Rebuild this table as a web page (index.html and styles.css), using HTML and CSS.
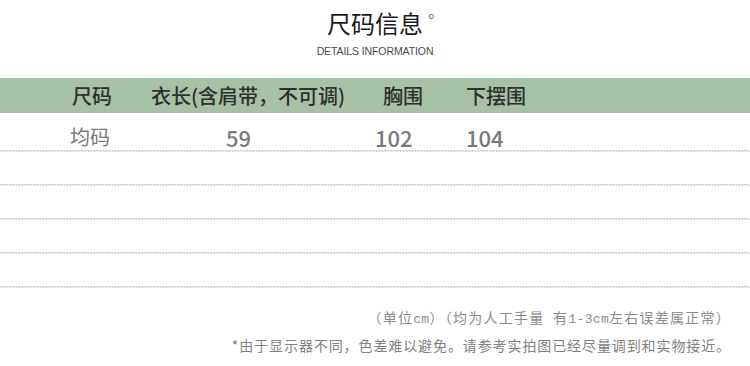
FILE: index.html
```html
<!DOCTYPE html>
<html lang="zh-CN">
<head>
<meta charset="utf-8">
<title>尺码信息</title>
<link rel="stylesheet" href="styles.css">
</head>
<body>
<div class="page">
  <header class="title">
    <h1 class="title-main">尺码信息<span class="deg">°</span></h1>
    <p class="title-sub">DETAILS INFORMATION</p>
  </header>
  <section class="table">
    <div class="row row-head">
      <span>尺码</span>
      <span>衣长(含肩带，不可调)</span>
      <span>胸围</span>
      <span>下摆围</span>
    </div>
    <div class="row row-data">
      <span>均码</span>
      <span class="num">59</span>
      <span class="num">102</span>
      <span class="num">104</span>
    </div>
    <div class="dots"></div>
    <div class="blank"></div>
    <div class="dots"></div>
    <div class="blank"></div>
    <div class="dots"></div>
    <div class="blank"></div>
    <div class="dots"></div>
    <div class="blank"></div>
    <div class="dots"></div>
  </section>
  <footer class="notes">
    <p class="note note-1">（单位<span class="mono">cm</span>）（均为人工手量&nbsp;&nbsp;有<span class="mono">1-3cm</span>左右误差属正常）</p>
    <p class="note note-2">*由于显示器不同，色差难以避免。请参考实拍图已经尽量调到和实物接近。</p>
  </footer>
</div>
</body>
</html>
```

FILE: styles.css
```css
* { box-sizing: border-box; }
html, body { margin: 0; padding: 0; background: #fff; }
.page {
  width: 750px;
  height: 366px;
  overflow: hidden;
  font-family: "Noto Sans CJK SC", "Noto Sans", sans-serif;
}
.title { text-align: center; padding-top: 9px; }
.title-main {
  margin: 0;
  font-size: 24px;
  line-height: 28px;
  font-weight: 400;
  color: #1a1a1a;
  position: relative;
  display: inline-block;
}
.deg {
  position: absolute;
  left: 100%;
  top: 2px;
  margin-left: 4px;
  font-size: 17px;
  line-height: 20px;
  font-family: "DejaVu Sans", sans-serif;
  font-weight: 300;
  color: #333;
}
.title-sub {
  margin: 7px 0 0;
  font-family: "Liberation Sans", sans-serif;
  font-size: 10.5px;
  line-height: 12px;
  color: #4a4a4a;
  letter-spacing: -0.1px;
}
.table { margin-top: 21px; }
.row { display: grid; font-size: 20px; }
.row-head {
  height: 35px;
  line-height: 35px;
  background: #a6c1a6;
  color: #2f2f2f;
  padding-left: 72px;
  grid-template-columns: 79px 232px 83px 1fr;
  font-weight: 500;
}
.row-data {
  height: 37px;
  padding-top: 12px;
  line-height: 24px;
  color: #7a7a7a;
  padding-left: 70px;
  grid-template-columns: 156px 149px 91px 1fr;
}
.num { font-weight: 500; font-size: 22px; }
.dots {
  height: 2px;
  background-image:
    repeating-linear-gradient(90deg, #c9c9c9 0 2px, transparent 2px 3px),
    repeating-linear-gradient(90deg, transparent 0 1px, #d9d9d9 1px 3px);
  background-size: 100% 1px, 100% 1px;
  background-position: 0 0, 0 1px;
  background-repeat: no-repeat;
}
.blank { height: 32px; }
.notes {
  padding-top: 15px;
  padding-right: 19px;
  text-align: right;
}
.note {
  margin: 0;
  height: 28px;
  font-size: 14px;
  line-height: 28px;
  white-space: nowrap;
}
.note-1 { color: #8c8c8c; letter-spacing: 1.25px; }
.note-2 { color: #808080; letter-spacing: 0.9px; }
.mono {
  font-family: "Liberation Mono", monospace;
  font-size: 13px;
  line-height: 1;
  letter-spacing: 0.3px;
}
```
